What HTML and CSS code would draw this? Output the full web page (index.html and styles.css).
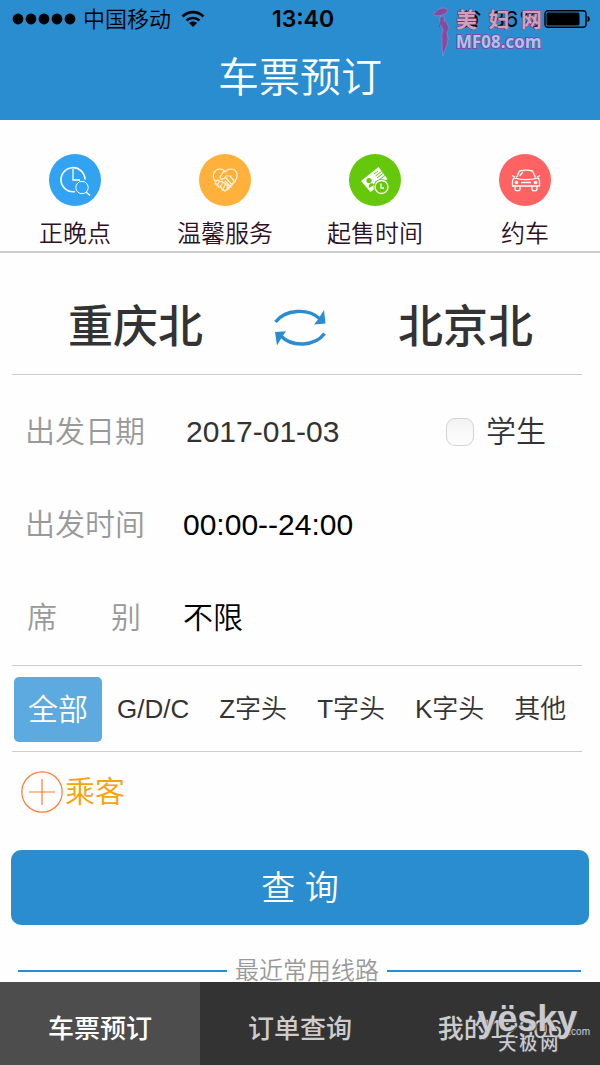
FILE: index.html
```html
<!DOCTYPE html>
<html lang="zh-CN">
<head>
<meta charset="utf-8">
<meta name="viewport" content="width=device-width, initial-scale=1">
<title>车票预订</title>
<link rel="stylesheet" href="styles.css">
</head>
<body>
<header class="header">
  <div class="status">
    <div class="status-side">
      <svg class="signal" viewBox="0 0 64 12" aria-hidden="true"><circle cx="6" cy="6" r="5.4"/><circle cx="19" cy="6" r="5.4"/><circle cx="32" cy="6" r="5.4"/><circle cx="45" cy="6" r="5.4"/><circle cx="58" cy="6" r="5.4"/></svg>
      <span class="carrier">中国移动</span>
      <svg class="wifi" viewBox="0 0 24 18" aria-hidden="true"><path d="M1.5 6.5C7.5.7 16.500.7 22.500 6.500M5.500 10.500c3.700-3.400 9.300-3.400 13 0" fill="none" stroke="#000" stroke-width="2.600"/><path d="M8 13c2.400-2 5.600-2 8 0l-4 4z"/></svg>
    </div>
    <time class="clock">13:40</time>
    <div class="status-side status-right">
      <svg class="alarm" viewBox="0 0 20 20" aria-hidden="true"><circle cx="10" cy="11" r="7"/><path d="M1 6l5-4M19 6l-5-4M4 18l2-2M16 18l-2-2" stroke="#000" stroke-width="2"/></svg>
      <span>86%</span>
      <svg class="battery" viewBox="0 0 46 18" aria-hidden="true"><rect x="1" y=".8" width="41" height="16.400" rx="3" fill="none" stroke="#000" stroke-width="1.400"/><rect x="2.500" y="2.500" width="33" height="13" rx="1.500"/><path d="M43.500 6c3 .5 3 5.500 0 6z"/></svg>
    </div>
  </div>
  <h1 class="title">车票预订</h1>
  <div class="mark-top" aria-hidden="true">
    <svg class="lady" viewBox="0 0 18 50"><path d="M1 6c4 0 4-5 10-5 3 0 5 2 5 3-3 4-9 6-14 4zM8 10c3-2 5 0 4 4 5 3 5 7 3 12l1 5c0 8-4 12-5 18-1-6-1-10-1-17-1-5 1-7 1-10-2-2-4-6-3-12z" fill="#874a9c" stroke="#a08bd0" stroke-width=".6"/><path d="M13 15l3 7-4 4M9 15l-2 5" fill="none" stroke="#874a9c" stroke-width="1.200"/></svg>
    <div class="mark-text">
      <div class="mark-name"><span>美</span><span>妇</span><span>网</span></div>
      <div class="mark-url">MF08.com</div>
    </div>
  </div>
</header>

<main class="main">
  <nav class="shortcuts">
    <a class="shortcut" href="#">
      <svg class="shortcut-icon" viewBox="0 0 52 52"><circle cx="26" cy="26" r="26" fill="#32a2f2"/><g fill="none" stroke="#fff"><path d="M26 37.500A12 12 0 1 1 36 25.500" stroke-width="1.600"/><path d="M24 15v11h7" stroke-width="1.300"/><circle cx="33" cy="33.500" r="6.200" stroke-width="1"/><path d="M37 38l4 3.500" stroke-width="1.300"/></g></svg>
      <span>正晚点</span>
    </a>
    <a class="shortcut" href="#">
      <svg class="shortcut-icon" viewBox="0 0 52 52"><circle cx="26" cy="26" r="26" fill="#ffb13b"/><g fill="none" stroke="#fff4df" stroke-width="1.200" stroke-linecap="round" stroke-linejoin="round"><path d="M16 27c-4-6 0-12 5-12 3 0 4 1 5 3 2-3 4-3 6-3 6 0 8 7 4 12l-8 9"/><path d="M25 17l-4 6c0 3 4 3 6-1h4l5 6"/><path d="M17 27l2-1 2 2 2-1 1 2 2 0 1 2 2 0 0 3-3 3-3-1M17 27l-1 3 3 0 0 3 3 0 1 3 2 0M20 28l-2 3M23 30l-2 3M26 31l-2 4M27 24l6 7M26 27l6 6M28 33l2 2"/></g></svg>
      <span>温馨服务</span>
    </a>
    <a class="shortcut" href="#">
      <svg class="shortcut-icon" viewBox="0 0 52 52"><circle cx="26" cy="26" r="26" fill="#66c80a"/><path d="M12 27l17.500-14 9 12-17 13z" fill="#fff"/><g fill="none" stroke="#66c80a" stroke-width="1"><path d="M25 20l4-3M26.500 22l6-4.500M28 24l6-4.500M30 26l6-4.500"/></g><circle cx="20" cy="26.500" r="2.600" fill="#66c80a"/><path d="M20 34c-1-5 4-6 5-3z" fill="#66c80a"/><circle cx="32.500" cy="33" r="8" fill="#66c80a"/><circle cx="32.500" cy="33" r="6.500" fill="none" stroke="#fff" stroke-width="1.300"/><path d="M32 29.500v4.500h3" fill="none" stroke="#fff" stroke-width="1.300"/></svg>
      <span>起售时间</span>
    </a>
    <a class="shortcut" href="#">
      <svg class="shortcut-icon" viewBox="0 0 52 52"><circle cx="26" cy="26" r="26" fill="#ff6262"/><g fill="none" stroke="#fff" stroke-width="1.300" stroke-linejoin="round"><path d="M17.500 23.500l3-6.500c4-1 9-1 13 0l3 6.500M13 21.500l3 1.500M41 21.500l-3 1.500M15 24c7 2 17 2 24 0 1 1 1.500 2 1.500 3.500V32h-27v-4.500c0-1.500.5-2.500 1.500-3.500zM16 32.500V35c0 2.500 5 2.500 5 0v-2.500M33 32.500V35c0 2.500 5 2.500 5 0v-2.500M22 28.500h10M20.500 22l3.500-4"/></g><circle cx="17.500" cy="28.500" r="1.800" fill="#fff"/><circle cx="36.500" cy="28.500" r="1.800" fill="#fff"/></svg>
      <span>约车</span>
    </a>
  </nav>

  <form class="form">
    <div class="route">
      <button class="station" type="button">重庆北</button>
      <button class="swap" type="button" aria-label="交换出发地和目的地">
        <svg viewBox="0 0 54 40"><g fill="none" stroke="#2a8dd2" stroke-width="3.400"><path d="M1.500 14C11 1.500 34-.5 46 11"/><path d="M50.500 25.500C41 38.500 18 39.500 7 28"/></g><path d="M50 2l1.500 13.500L40 16.500l4-5zM1 24l11-.8-3.500 5L3 37.500z" fill="#2a8dd2"/></svg>
      </button>
      <button class="station" type="button">北京北</button>
    </div>

    <div class="fields">
      <div class="field">
        <span class="label" id="l-date">出发日期</span>
        <button class="value value-date" type="button" aria-labelledby="l-date">2017-01-03</button>
        <label class="student"><input class="check" type="checkbox"><span>学生</span></label>
      </div>
      <div class="field">
        <span class="label" id="l-time">出发时间</span>
        <button class="value" type="button" aria-labelledby="l-time">00:00--24:00</button>
      </div>
      <div class="field">
        <span class="label label-split" id="l-seat"><span>席</span><span>别</span></span>
        <button class="value" type="button" aria-labelledby="l-seat">不限</button>
      </div>
    </div>

    <div class="trains">
      <button class="train train-on" type="button">全部</button>
      <button class="train" type="button">G/D/C</button>
      <button class="train" type="button">Z字头</button>
      <button class="train" type="button">T字头</button>
      <button class="train" type="button">K字头</button>
      <button class="train" type="button">其他</button>
    </div>

    <button class="passenger" type="button">
      <svg class="plus" viewBox="0 0 42 42" aria-hidden="true"><g fill="none" stroke="#ff7a2c" stroke-width="1.200"><circle cx="21" cy="21" r="20.200"/><path d="M8 21h26M21 8v26"/></g></svg>
      <span>乘客</span>
    </button>
    <button class="submit" type="submit">查 询</button>
  </form>

  <h2 class="recent">最近常用线路</h2>
</main>

<nav class="tabs">
  <a class="tab tab-on" href="#">车票预订</a>
  <a class="tab" href="#">订单查询</a>
  <a class="tab" href="#">我的12306</a>
  <div class="mark-bottom" aria-hidden="true">
    <div class="sky"><span class="sky-name">yësky</span><span class="sky-com">.com</span></div>
    <div class="sky-cn"><span>天</span><span>极</span><span>网</span></div>
  </div>
</nav>
</body>
</html>
```
FILE: styles.css
```css
* { box-sizing: border-box; }

body {
  margin: 0;
  height: 100vh;
  display: flex;
  flex-direction: column;
  background: #fefefe;
  color: #333;
  font-family: "Liberation Sans", "Noto Sans CJK SC", sans-serif;
  line-height: 1.2;
}

a { color: inherit; text-decoration: none; }

button {
  border: 0;
  padding: 0;
  background: none;
  color: inherit;
  font: inherit;
  white-space: nowrap;
}

svg { display: block; }

/* header */
.header {
  position: relative;
  flex: none;
  height: 120px;
  background: #2a8dd0;
}

.status {
  display: grid;
  grid-template-columns: 1fr auto 1fr;
  align-items: center;
  height: 38px;
  padding: 0 10px 0 12px;
  color: #000;
  font-family: Inter, "Noto Sans CJK SC", sans-serif;
  font-size: 22px;
  line-height: 38px;
}

.status-side { display: flex; align-items: center; }
.status-right { justify-content: flex-end; gap: 4px; }
.signal { width: 64px; height: 12px; }
.carrier { margin: 0 10px 0 7px; font-weight: 350; }
.wifi { width: 24px; height: 18px; }
.clock { padding-left: 4px; font-size: 23px; font-weight: 600; }
.alarm { width: 20px; height: 20px; margin-right: 6px; }
.battery { width: 46px; height: 18px; }

.title {
  margin: 0;
  color: #fff;
  font-size: 41px;
  font-weight: 350;
  line-height: 80px;
  text-align: center;
}

.mark-top {
  position: absolute;
  top: 7px;
  right: 58px;
  display: flex;
  gap: 6px;
}

.lady { width: 18px; height: 50px; }

.mark-text {
  width: 86px;
  color: #a9c4ee;
  font-weight: 700;
  paint-order: stroke;
  -webkit-text-stroke: 2px #84489c;
}

.mark-name {
  display: flex;
  justify-content: space-between;
  color: #c9a3bc;
  font-family: "Noto Sans CJK SC", sans-serif;
  font-size: 21px;
  line-height: 23px;
  -webkit-text-stroke: 1px #84306c;
}

.mark-url {
  padding-top: 2px;
  font-family: "Noto Sans", sans-serif;
  font-size: 17px;
  line-height: 20px;
}

/* content */
.main { flex: 1; min-height: 0; overflow: hidden; }

.shortcuts {
  display: grid;
  grid-template-columns: repeat(4, 1fr);
  height: 133px;
  padding-top: 34px;
  border-bottom: 2px solid #ccc;
}

.shortcut {
  display: flex;
  flex-direction: column;
  align-items: center;
  gap: 10px;
  color: #2e1024;
  font-size: 24px;
  font-weight: 350;
  line-height: 36px;
}

.shortcut-icon { width: 52px; height: 52px; }

.form { padding: 0 11px; }

.route,
.fields,
.trains {
  margin: 0 7px 0 1px;
  border-bottom: 1px solid #ccc;
}

.route {
  display: flex;
  justify-content: space-between;
  align-items: center;
  height: 122px;
  padding: 28px 49px 0 56px;
}

.station {
  font-size: 45px;
  font-weight: 500;
  line-height: 68px;
}

.swap svg { width: 54px; height: 40px; }

.fields { padding: 10px 0 1px 13px; }

.field {
  display: flex;
  align-items: center;
  height: 93px;
  font-size: 30px;
  font-weight: 350;
}

.label { flex: none; width: 120px; margin-right: 38px; color: #999; }

.label-split {
  display: flex;
  justify-content: space-between;
  padding: 0 4px 0 2px;
}

.value { color: #000; }
.value-date { padding-left: 3px; color: #333; }

.student {
  display: flex;
  align-items: center;
  gap: 12px;
  margin: 0 36px 0 auto;
}

.check {
  appearance: none;
  width: 28px;
  height: 28px;
  margin: 0;
  border: 1px solid #d4d4d4;
  border-radius: 9px;
  background: linear-gradient(#f2f2f2, #fefefe);
}

.trains {
  display: flex;
  align-items: center;
  height: 86px;
  padding: 2px 2px 0;
}

.train {
  height: 65px;
  padding: 0 15px;
  font-size: 26px;
  font-weight: 350;
}

.train-on {
  padding: 0 14px;
  border-radius: 5px;
  background: #5caae0;
  color: #fff;
  font-size: 30px;
}

.passenger {
  display: flex;
  align-items: center;
  gap: 2px;
  height: 80px;
  margin-left: 10px;
  color: #f7a30c;
  font-size: 30px;
  font-weight: 350;
}

.plus { width: 42px; height: 42px; }

.submit {
  display: block;
  width: 100%;
  height: 75px;
  margin-top: 18px;
  padding-top: 2px;
  border-radius: 10px;
  background: #2a8dd0;
  color: #fff;
  font-size: 34px;
  font-weight: 350;
}

.recent {
  display: flex;
  align-items: center;
  gap: 8px;
  margin: 28px 19px 0 18px;
  color: #999;
  font-size: 24px;
  font-weight: 350;
  line-height: 36px;
}

.recent::before,
.recent::after {
  content: "";
  height: 2px;
  background: #2a8dd0;
}

.recent::before { flex: 14; }
.recent::after { flex: 13; }

/* bottom bar */
.tabs {
  position: relative;
  flex: none;
  display: grid;
  grid-template-columns: repeat(3, 1fr);
  height: 83px;
  background: #333;
}

.tab {
  padding-top: 7px;
  color: #ccc;
  font-size: 26px;
  font-weight: 500;
  line-height: 80px;
  text-align: center;
}

.tab-on { background: #4d4d4d; color: #fff; }

.mark-bottom {
  position: absolute;
  right: 10px;
  bottom: 11px;
  color: #c9cbd0;
  text-shadow: 1px 1px 1px #444;
}

.sky { display: flex; align-items: flex-end; }
.sky-name { font-size: 36px; font-weight: 700; line-height: 40px; }
.sky-com { margin-left: -9px; font-size: 10px; line-height: 14px; }

.sky-cn {
  display: flex;
  gap: 3px;
  margin: -5px 0 0 21px;
  font-size: 18px;
  font-weight: 500;
  line-height: 20px;
}
```
